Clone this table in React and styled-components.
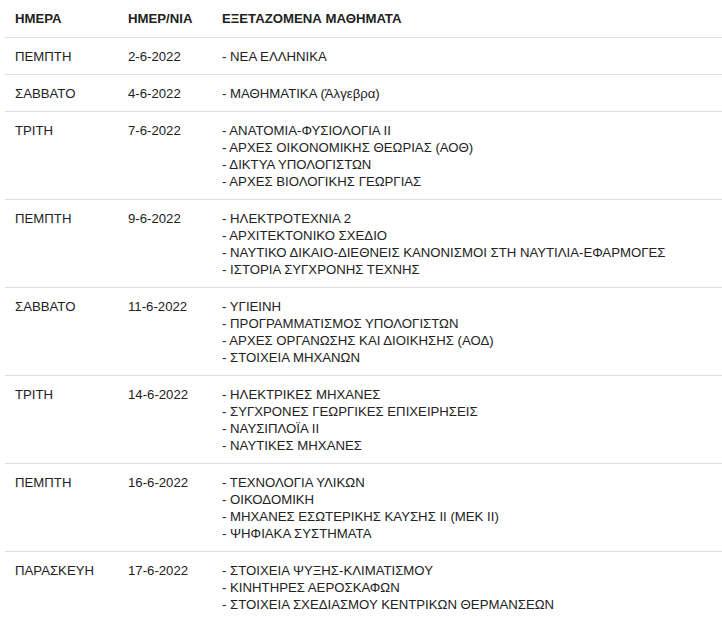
import React from 'react';
import styled, { createGlobalStyle } from 'styled-components';

const GlobalStyle = createGlobalStyle`
  html, body {
    margin: 0;
    padding: 0;
    background: #fff;
  }
  body {
    font-family: "Liberation Sans", Arial, sans-serif;
    font-size: 13.2px;
    color: #222;
  }
`;

const schedule = [
  { day: 'ΠΕΜΠΤΗ', date: '2-6-2022', subjects: ['ΝΕΑ ΕΛΛΗΝΙΚΑ'] },
  { day: 'ΣΑΒΒΑΤΟ', date: '4-6-2022', subjects: ['ΜΑΘΗΜΑΤΙΚΑ (Άλγεβρα)'] },
  {
    day: 'ΤΡΙΤΗ',
    date: '7-6-2022',
    subjects: [
      'ΑΝΑΤΟΜΙΑ-ΦΥΣΙΟΛΟΓΙΑ ΙΙ',
      'ΑΡΧΕΣ ΟΙΚΟΝΟΜΙΚΗΣ ΘΕΩΡΙΑΣ (ΑΟΘ)',
      'ΔΙΚΤΥΑ ΥΠΟΛΟΓΙΣΤΩΝ',
      'ΑΡΧΕΣ ΒΙΟΛΟΓΙΚΗΣ ΓΕΩΡΓΙΑΣ',
    ],
  },
  {
    day: 'ΠΕΜΠΤΗ',
    date: '9-6-2022',
    subjects: [
      'ΗΛΕΚΤΡΟΤΕΧΝΙΑ 2',
      'ΑΡΧΙΤΕΚΤΟΝΙΚΟ ΣΧΕΔΙΟ',
      'ΝΑΥΤΙΚΟ ΔΙΚΑΙΟ-ΔΙΕΘΝΕΙΣ ΚΑΝΟΝΙΣΜΟΙ ΣΤΗ ΝΑΥΤΙΛΙΑ-ΕΦΑΡΜΟΓΕΣ',
      'ΙΣΤΟΡΙΑ ΣΥΓΧΡΟΝΗΣ ΤΕΧΝΗΣ',
    ],
  },
  {
    day: 'ΣΑΒΒΑΤΟ',
    date: '11-6-2022',
    subjects: [
      'ΥΓΙΕΙΝΗ',
      'ΠΡΟΓΡΑΜΜΑΤΙΣΜΟΣ ΥΠΟΛΟΓΙΣΤΩΝ',
      'ΑΡΧΕΣ ΟΡΓΑΝΩΣΗΣ ΚΑΙ ΔΙΟΙΚΗΣΗΣ (ΑΟΔ)',
      'ΣΤΟΙΧΕΙΑ ΜΗΧΑΝΩΝ',
    ],
  },
  {
    day: 'ΤΡΙΤΗ',
    date: '14-6-2022',
    subjects: [
      'ΗΛΕΚΤΡΙΚΕΣ ΜΗΧΑΝΕΣ',
      'ΣΥΓΧΡΟΝΕΣ ΓΕΩΡΓΙΚΕΣ ΕΠΙΧΕΙΡΗΣΕΙΣ',
      'ΝΑΥΣΙΠΛΟΪΑ ΙΙ',
      'ΝΑΥΤΙΚΕΣ ΜΗΧΑΝΕΣ',
    ],
  },
  {
    day: 'ΠΕΜΠΤΗ',
    date: '16-6-2022',
    subjects: [
      'ΤΕΧΝΟΛΟΓΙΑ ΥΛΙΚΩΝ',
      'ΟΙΚΟΔΟΜΙΚΗ',
      'ΜΗΧΑΝΕΣ ΕΣΩΤΕΡΙΚΗΣ ΚΑΥΣΗΣ ΙΙ (ΜΕΚ ΙΙ)',
      'ΨΗΦΙΑΚΑ ΣΥΣΤΗΜΑΤΑ',
    ],
  },
  {
    day: 'ΠΑΡΑΣΚΕΥΗ',
    date: '17-6-2022',
    subjects: [
      'ΣΤΟΙΧΕΙΑ ΨΥΞΗΣ-ΚΛΙΜΑΤΙΣΜΟΥ',
      'ΚΙΝΗΤΗΡΕΣ ΑΕΡΟΣΚΑΦΩΝ',
      'ΣΤΟΙΧΕΙΑ ΣΧΕΔΙΑΣΜΟΥ ΚΕΝΤΡΙΚΩΝ ΘΕΡΜΑΝΣΕΩΝ',
    ],
  },
];

const App = () => {
  return (
    <>
      <GlobalStyle />
      <Wrap>
        <Table>
          <thead>
            <tr>
              <HeadCell $width={113}>ΗΜΕΡΑ</HeadCell>
              <HeadCell $width={94}>ΗΜΕΡ/ΝΙΑ</HeadCell>
              <HeadCell>ΕΞΕΤΑΖΟΜΕΝΑ ΜΑΘΗΜΑΤΑ</HeadCell>
            </tr>
          </thead>
          <tbody>
            {schedule.map((row, idx) => (
              <Row key={idx}>
                <Cell>{row.day}</Cell>
                <Cell>{row.date}</Cell>
                <Cell>
                  {row.subjects.map((s, i) => (
                    <Subject key={i}>- {s}</Subject>
                  ))}
                </Cell>
              </Row>
            ))}
          </tbody>
        </Table>
      </Wrap>
    </>
  );
};

const Wrap = styled.div`
  padding-left: 5px;
`;

const Table = styled.table`
  width: 717px;
  border-collapse: collapse;
  border-spacing: 0;
  table-layout: fixed;
`;

const HeadCell = styled.th`
  box-sizing: border-box;
  width: ${(p) => (p.$width ? `${p.$width}px` : 'auto')};
  padding: 10px 10px;
  text-align: left;
  font-weight: bold;
  line-height: 17px;
  color: #222;
  border-bottom: 1px solid #ddd;
`;

const Row = styled.tr`
  border-bottom: 1px solid #ddd;
`;

const Cell = styled.td`
  box-sizing: border-box;
  padding: 10px 10px 9px;
  vertical-align: top;
  line-height: 17px;
  color: #222;
`;

const Subject = styled.div`
  white-space: nowrap;
`;

export default App;
